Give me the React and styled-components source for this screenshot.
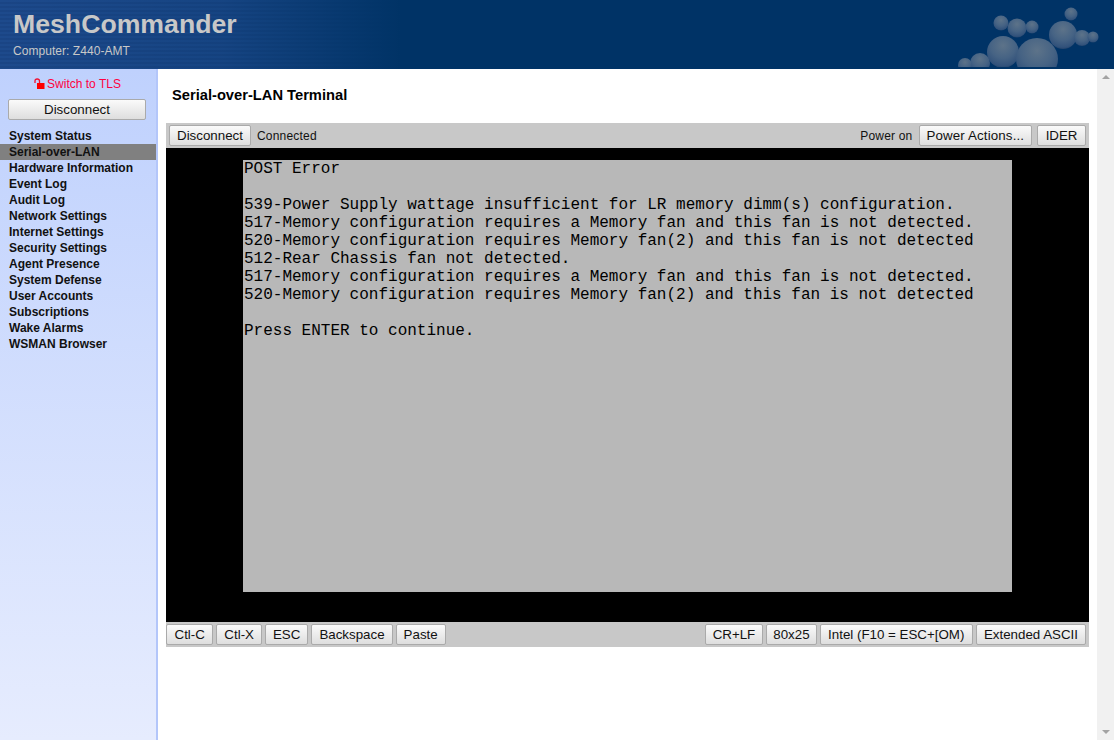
import React from "react"
import styled, { createGlobalStyle } from "styled-components"

const GlobalStyle = createGlobalStyle`
  html, body {
    margin: 0;
    height: 100%;
    overflow: hidden;
    background: #fff;
    font-family: "Liberation Sans", Arial, sans-serif;
  }
  #root {
    height: 100%;
  }
`

const menuItems = [
  "System Status",
  "Serial-over-LAN",
  "Hardware Information",
  "Event Log",
  "Audit Log",
  "Network Settings",
  "Internet Settings",
  "Security Settings",
  "Agent Presence",
  "System Defense",
  "User Accounts",
  "Subscriptions",
  "Wake Alarms",
  "WSMAN Browser",
]

const screenText = `POST Error

539-Power Supply wattage insufficient for LR memory dimm(s) configuration.
517-Memory configuration requires a Memory fan and this fan is not detected.
520-Memory configuration requires Memory fan(2) and this fan is not detected
512-Rear Chassis fan not detected.
517-Memory configuration requires a Memory fan and this fan is not detected.
520-Memory configuration requires Memory fan(2) and this fan is not detected

Press ENTER to continue.`

const spheres = [
  [117, 14, 6.5],
  [47, 23, 7.5],
  [63, 28, 9.5],
  [78, 27, 6.5],
  [109, 35, 14],
  [128, 38, 8],
  [139, 37, 5.5],
  [49, 52, 16],
  [83, 59, 21],
  [26, 63, 10],
  [11, 65, 7],
]

const Bubbles = () => (
  <Logo viewBox="0 0 160 69">
    <defs>
      <radialGradient id="ball" cx="50%" cy="30%" r="72%">
        <stop offset="0%" stopColor="#5d7389" />
        <stop offset="55%" stopColor="#466384" />
        <stop offset="88%" stopColor="#32527b" />
        <stop offset="100%" stopColor="#1f4068" />
      </radialGradient>
      <clipPath id="logoClip">
        <rect x="0" y="0" width="160" height="67" />
      </clipPath>
    </defs>
    <g clipPath="url(#logoClip)">
      {spheres.map(([cx, cy, r]) => (
        <circle key={`${cx}-${cy}`} cx={cx} cy={cy} r={r} fill="url(#ball)" />
      ))}
    </g>
  </Logo>
)

const LockIcon = () => (
  <svg width="11" height="12" viewBox="0 0 11 12">
    <rect x="3" y="5" width="7.5" height="6" fill="#ff0000" />
    <path d="M1 5V3Q1 1 3.2 1Q5.5 1 5.5 3V5" fill="none" stroke="#f01030" strokeWidth="1.3" />
  </svg>
)

const App = () => (
  <Page>
    <GlobalStyle />
    <Header>
      <Brand>
        <Title>MeshCommander</Title>
        <Computer>Computer: Z440-AMT</Computer>
      </Brand>
      <Bubbles />
    </Header>
    <Body>
      <Sidebar>
        <TlsLink>
          <LockIcon />
          Switch to TLS
        </TlsLink>
        <SideButton>Disconnect</SideButton>
        <Menu>
          {menuItems.map(item => (
            <MenuItem key={item} $active={item === "Serial-over-LAN"}>
              {item}
            </MenuItem>
          ))}
        </Menu>
      </Sidebar>
      <Main>
        <Heading>Serial-over-LAN Terminal</Heading>
        <Terminal>
          <Bar>
            <Group>
              <Button>Disconnect</Button>
              <Status>Connected</Status>
            </Group>
            <Group>
              <Status>Power on</Status>
              <ActionsButton>Power Actions...</ActionsButton>
              <IderButton>IDER</IderButton>
            </Group>
          </Bar>
          <Screen>
            <Console>{screenText}</Console>
          </Screen>
          <Bar $bottom>
            <Group>
              <Button $pad="7.5px">Ctl-C</Button>
              <Button>Ctl-X</Button>
              <Button>ESC</Button>
              <Button>Backspace</Button>
              <Button>Paste</Button>
            </Group>
            <Group>
              <Button>CR+LF</Button>
              <Button $pad="6px">80x25</Button>
              <Button $pad="7.5px">Intel (F10 = ESC+[OM)</Button>
              <Button>Extended ASCII</Button>
            </Group>
          </Bar>
        </Terminal>
      </Main>
      <Scrollbar>
        <Arrow />
        <Arrow $down />
      </Scrollbar>
    </Body>
  </Page>
)

const Page = styled.div`
  display: flex;
  flex-direction: column;
  height: 740px;
  width: 1114px;
  overflow: hidden;
`

const Header = styled.header`
  display: flex;
  justify-content: space-between;
  height: 69px;
  flex: none;
  background:
    linear-gradient(90deg, rgba(0, 51, 102, 0) 0%, rgba(0, 51, 102, 0.25) 20%, #003366 36%),
    repeating-linear-gradient(180deg, #1d4a8c 0 2px, #1a4585 2px 4px);
`

const Brand = styled.div`
  padding: 9px 0 0 13px;
  color: #c8c8c8;
`

const Title = styled.div`
  font-size: 26.67px;
  font-weight: bold;
  line-height: 31px;
`

const Computer = styled.div`
  font-size: 12px;
  line-height: 14px;
  margin-top: 4px;
  letter-spacing: 0.05px;
`

const Logo = styled.svg`
  width: 160px;
  height: 69px;
`

const Body = styled.div`
  display: flex;
  flex: 1;
  min-height: 0;
`

const Sidebar = styled.nav`
  width: 156px;
  flex: none;
  box-sizing: content-box;
  border-right: 2px solid #b3c6fa;
  background: linear-gradient(180deg, #bfd1fd 0%, #e6ecfe 100%);
  display: flex;
  flex-direction: column;
`

const TlsLink = styled.div`
  display: flex;
  justify-content: center;
  align-items: center;
  gap: 2px;
  height: 14px;
  margin-top: 8px;
  padding-right: 1px;
  color: #ff0040;
  font-size: 12px;
`

const SideButton = styled.button`
  margin: 8px 10px 0 8px;
  height: 21px;
  padding: 0;
  border: 1px solid #aaa;
  border-radius: 2px;
  background: linear-gradient(180deg, #fafafa 0%, #dedede 100%);
  color: #111;
  font: 13.33px "Liberation Sans", Arial, sans-serif;
`

const Menu = styled.div`
  margin-top: 8px;
`

const MenuItem = styled.div`
  height: 16px;
  line-height: 16px;
  padding-left: 9px;
  font-size: 12px;
  font-weight: bold;
  color: #111;
  background: ${({ $active }) => ($active ? "#808080" : "transparent")};
`

const Main = styled.main`
  flex: 1;
  min-width: 0;
  padding: 0 8px;
`

const Heading = styled.h1`
  margin: 18px 0 0 6px;
  height: 36px;
  font-size: 14.7px;
  line-height: 16px;
  font-weight: bold;
  color: #000;
`

const Terminal = styled.div`
  display: flex;
  flex-direction: column;
`

const Bar = styled.div`
  display: flex;
  justify-content: space-between;
  align-items: center;
  height: 25px;
  padding: 0 3px 0 ${({ $bottom }) => ($bottom ? "0" : "3px")};
  background: #c8c8c8;
`

const Group = styled.div`
  display: flex;
  align-items: center;
  gap: 3px;
`

const Button = styled.button`
  height: 21px;
  padding: 0 ${({ $pad }) => $pad || "7px"};
  border: 1px solid #aaa;
  border-radius: 2px;
  background: linear-gradient(180deg, #fafafa 0%, #dedede 100%);
  color: #111;
  font: 13.33px "Liberation Sans", Arial, sans-serif;
  white-space: nowrap;
`

const ActionsButton = styled(Button)`
  letter-spacing: 0.13px;
`

const IderButton = styled(Button)`
  margin-left: 2px;
  padding: 0 7.5px;
`

const Status = styled.span`
  margin: 0 3px;
  font-size: 12px;
  letter-spacing: 0.2px;
  color: #111;
`

const Screen = styled.div`
  display: flex;
  justify-content: center;
  height: 474px;
  padding-top: 12px;
  box-sizing: border-box;
  background: #000;
`

const Console = styled.pre`
  margin: 0;
  width: 768px;
  height: 432px;
  padding-left: 1px;
  background: #b8b8b8;
  color: #000;
  font: 16px/18px "Liberation Mono", "Courier New", monospace;
`

const Scrollbar = styled.div`
  width: 17px;
  flex: none;
  background: #f1f1f1;
  display: flex;
  flex-direction: column;
  justify-content: space-between;
  align-items: center;
  padding: 6px 0;
  box-sizing: border-box;
`

const Arrow = styled.span`
  width: 0;
  height: 0;
  border-left: 4px solid transparent;
  border-right: 4px solid transparent;
  border-${({ $down }) => ($down ? "top" : "bottom")}: 4px solid #a3a3a3;
`

export default App
